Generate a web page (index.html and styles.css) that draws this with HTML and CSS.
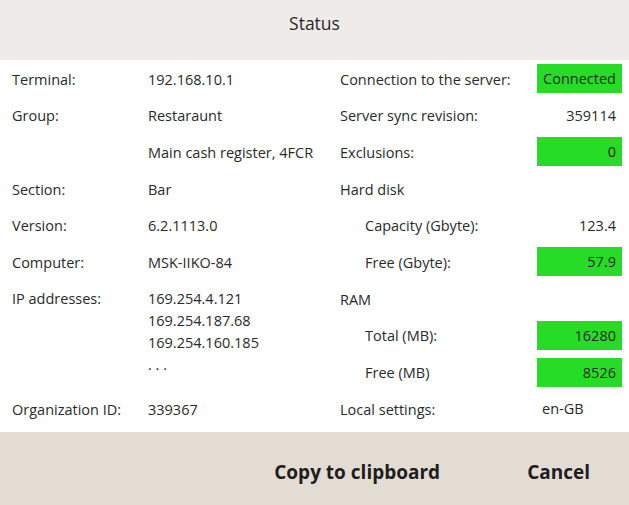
FILE: index.html
```html
<!DOCTYPE html>
<html>
<head>
<meta charset="utf-8">
<link rel="stylesheet" href="styles.css">
</head>
<body>
<div class="dialog">
  <div class="header">Status</div>
  <div class="content">
    <div class="col left">
      <div class="lbl">Terminal:</div><div class="val">192.168.10.1</div>
      <div class="lbl">Group:</div><div class="val">Restaraunt</div>
      <div class="lbl"></div><div class="val">Main cash register, 4FCR</div>
      <div class="lbl">Section:</div><div class="val">Bar</div>
      <div class="lbl">Version:</div><div class="val">6.2.1113.0</div>
      <div class="lbl">Computer:</div><div class="val">MSK-IIKO-84</div>
      <div class="lbl span3">IP addresses:</div>
      <div class="val span3 multi">
        <div>169.254.4.121</div>
        <div>169.254.187.68</div>
        <div>169.254.160.185</div>
        <div>. . .</div>
      </div>
      <div class="lbl">Organization ID:</div><div class="val">339367</div>
    </div>
    <div class="col right">
      <div class="lbl">Connection to the server:</div><div class="num ok">Connected</div>
      <div class="lbl">Server sync revision:</div><div class="num">359114</div>
      <div class="lbl">Exclusions:</div><div class="num ok">0</div>
      <div class="lbl">Hard disk</div><div class="num"></div>
      <div class="lbl sub">Capacity (Gbyte):</div><div class="num">123.4</div>
      <div class="lbl sub">Free (Gbyte):</div><div class="num ok">57.9</div>
      <div class="lbl">RAM</div><div class="num"></div>
      <div class="lbl sub">Total (MB):</div><div class="num ok">16280</div>
      <div class="lbl sub">Free (MB)</div><div class="num ok">8526</div>
      <div class="lbl">Local settings:</div><div class="num loc">en-GB</div>
    </div>
  </div>
  <div class="footer">
    <button class="btn copy">Copy to clipboard</button>
    <button class="btn cancel">Cancel</button>
  </div>
</div>
</body>
</html>
```
FILE: styles.css
```css
html, body {
  margin: 0;
  padding: 0;
  background: #ffffff;
}
body {
  font-family: "Open Sans", "Noto Sans", sans-serif;
  color: #222222;
  width: 629px;
  height: 505px;
  overflow: hidden;
}
.dialog {
  display: flex;
  flex-direction: column;
  height: 505px;
}
.header {
  height: 60px;
  background: #efebe8;
  display: flex;
  align-items: center;
  justify-content: center;
  font-size: 17.5px;
  padding-bottom: 14px;
  box-sizing: border-box;
  color: #2a2a2a;
}
.content {
  height: 372px;
  box-sizing: border-box;
  padding: 4px 7px 0 12px;
  display: flex;
  font-size: 14.5px;
}
.col {
  display: grid;
  grid-auto-rows: 29px;
  row-gap: 7.7px;
  align-items: center;
}
.lbl, .val {
  padding-top: 1px;
}
.left {
  width: 328px;
  grid-template-columns: 136px 1fr;
}
.right {
  flex: 1;
  grid-template-columns: 1fr 85px;
}
.lbl, .val, .num {
  white-space: nowrap;
  color: #2a2a2a;
}
.span3 {
  grid-row: span 3;
  align-self: start;
}
.multi div {
  line-height: 21.8px;
}
.val.multi {
  padding-top: 4px;
}
.lbl.span3 {
  padding-top: 5px;
}
.sub {
  padding-left: 25px;
}
.num {
  height: 29px;
  line-height: 30px;
  text-align: right;
  padding-right: 6px;
}
.num.ok {
  background: #27dc27;
}
.num.loc {
  text-align: left;
  padding-left: 5px;
}
.footer {
  flex: 1;
  background: #e3dcd2;
  display: flex;
  justify-content: flex-end;
  align-items: center;
  padding-right: 39px;
  gap: 87px;
  padding-top: 6px;
}
.btn {
  background: none;
  border: none;
  padding: 0;
  font-family: "Open Sans", "Noto Sans", sans-serif;
  font-weight: bold;
  font-size: 19px;
  color: #1e1e1e;
}
```
